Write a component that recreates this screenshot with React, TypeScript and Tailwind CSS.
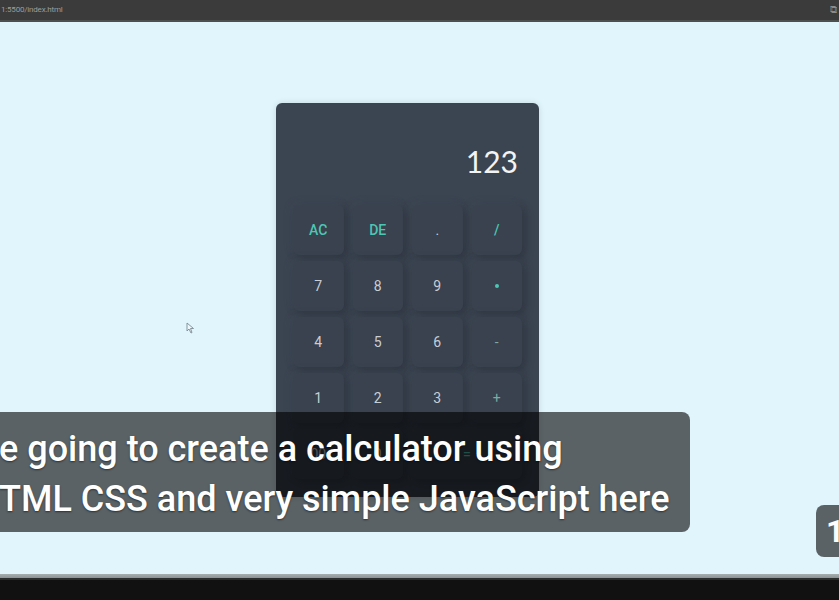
import React from "react";

const keys: { label: string; kind: "num" | "op" | "fn"; span?: boolean }[] = [
  { label: "AC", kind: "fn" },
  { label: "DE", kind: "fn" },
  { label: ".", kind: "num" },
  { label: "/", kind: "fn" },
  { label: "7", kind: "num" },
  { label: "8", kind: "num" },
  { label: "9", kind: "num" },
  { label: "*", kind: "fn" },
  { label: "4", kind: "num" },
  { label: "5", kind: "num" },
  { label: "6", kind: "num" },
  { label: "-", kind: "op" },
  { label: "1", kind: "num" },
  { label: "2", kind: "num" },
  { label: "3", kind: "num" },
  { label: "+", kind: "op" },
  { label: "00", kind: "num" },
  { label: "0", kind: "num" },
  { label: "=", kind: "fn", span: true },
];

export default function App() {
  return (
    <div className="relative w-[839px] h-[600px] overflow-hidden flex flex-col bg-[#e1f5fd]" style={{ fontFamily: "Roboto, 'Liberation Sans', sans-serif" }}>
      {/* browser top bar */}
      <div className="h-[22px] bg-[#3a3b3a] flex items-center justify-between pl-[1px] pr-[2px] border-b-2 border-[#4d504f]">
        <span className="text-[8px] text-[#9c9e9d] leading-none tracking-tight">1:5500/index.html</span>
        <span className="text-[10px] text-[#8a8c8b] leading-none">⧉</span>
      </div>

      {/* page */}
      <div className="flex-1 bg-[#e1f5fd]">
        <div className="ml-[276px] mt-[81px] w-[263px] h-[394px] rounded-[6px] bg-[#3b4451] shadow-[0_0_6px_rgba(0,0,0,0.12)] px-[17px] pt-[40px]">
          <div className="h-[62px] flex justify-end pr-[4px] pt-[3px]">
            <span className="text-[30px] leading-none text-[#f1f3f4] font-normal" style={{ fontFamily: "Lato, 'Open Sans', sans-serif" }}>123</span>
          </div>
          <div className="grid grid-cols-4 gap-x-[9px] gap-y-[6px]">
            {keys.map((k) => (
              <div
                key={k.label}
                className={`${k.span ? "col-span-2" : ""} h-[50px] rounded-[6px] bg-[#39424e] shadow-[3px_3px_8px_rgba(25,30,38,0.35),-2px_-2px_7px_rgba(75,86,100,0.25)] flex items-center justify-center text-[14px] ${
                  k.kind === "fn" ? "text-[#4cc7b4] font-medium" : k.kind === "op" ? "text-[#7fa8a4]" : "text-[#c9ced4]"
                }`}
                style={{ fontFamily: "Roboto, 'Open Sans', sans-serif" }}
              >
                {k.label === "*" ? <span className="w-[4px] h-[4px] rounded-full bg-[#4cc7b4] block" /> : k.label}
              </div>
            ))}
          </div>
        </div>
      </div>

      {/* bottom bar */}
      <div className="h-[4px] bg-gradient-to-b from-[#a6aeaf] to-[#8b9394]" />
      <div className="h-[2px] bg-[#2a2e2d]" />
      <div className="h-[20px] bg-[#111111]" />

      {/* cursor */}
      <svg className="absolute left-[186px] top-[322px]" width="9" height="12" viewBox="0 0 9 12">
        <path d="M1 1 L1 9 L3 7 L5 11 L6 10.5 L4.5 6.5 L7.5 6.5 Z" fill="#eef7fb" stroke="#7c8a92" strokeWidth="0.9" />
      </svg>

      {/* caption overlay */}
      <div className="absolute left-[-12px] top-[412px] w-[702px] h-[120px] rounded-[8px] bg-[rgba(0,0,0,0.6)] pl-[11px] pt-[12px]">
        <div className="text-white text-[36px] font-medium leading-[50px] whitespace-nowrap tracking-[0px]" style={{ textShadow: "0 1px 2px rgba(0,0,0,0.5)" }}>
          <div>e going to create a calculator using</div>
          <div>TML CSS and very simple JavaScript here</div>
        </div>
      </div>

      {/* right badge */}
      <div className="absolute left-[816px] top-[505px] w-[40px] h-[52px] rounded-[8px] bg-[rgba(0,0,0,0.6)] pl-[10px] flex items-center">
        <span className="text-white text-[32px] font-bold leading-none">1</span>
      </div>
    </div>
  );
}
